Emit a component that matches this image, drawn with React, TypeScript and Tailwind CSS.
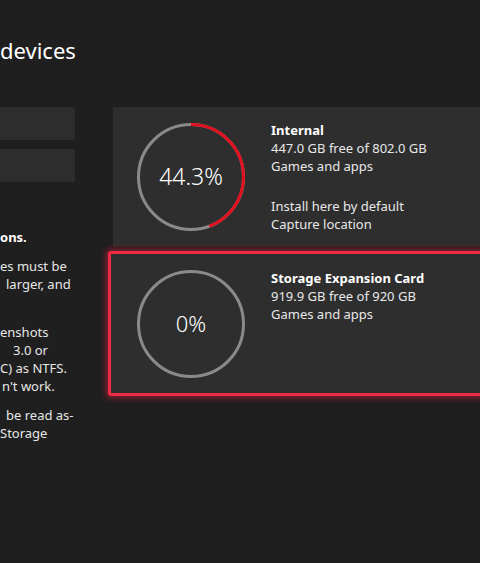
const font = { fontFamily: '"Noto Sans", "Open Sans", sans-serif' };

type RingProps = { percent: number; label: string; labelClass: string };

const Ring = ({ percent, label, labelClass }: RingProps) => {
  const r = 52.5;
  const c = 2 * Math.PI * r;
  return (
    <div className="relative h-[108px] w-[108px] shrink-0">
      <svg width="108" height="108" viewBox="0 0 108 108" className="absolute inset-0">
        <circle cx="54" cy="54" r={r} fill="none" stroke="#8a8a8a" strokeWidth="3" />
        {percent > 0 && (
          <circle
            cx="54"
            cy="54"
            r={r}
            fill="none"
            stroke="#e2101f"
            strokeWidth="3"
            strokeDasharray={`${(c * percent) / 100} ${c}`}
            transform="rotate(-90 54 54)"
          />
        )}
      </svg>
      <div className={`absolute inset-0 flex items-center justify-center text-white ${labelClass}`}>{label}</div>
    </div>
  );
};

export default function App() {
  return (
    <div className="h-[563px] w-[480px] overflow-hidden bg-[#1f1f1f] text-white" style={font}>
      <h1 className="pt-[35px] text-[22px] leading-[30px] font-normal text-white">devices</h1>
      <div className="mt-[42px] flex">
        <div className="w-[75px] shrink-0">
          <div className="h-[33px] rounded-r-[2px] bg-[#2d2d2d]" />
          <div className="mt-[9px] h-[33px] rounded-r-[2px] bg-[#2d2d2d]" />
          <div className="mt-[46px] w-[120px] text-[13px] leading-[18px] text-[#e6e6e6]">
            <p className="font-bold text-white">ons.</p>
            <div className="mt-[11px]">
              <p className="whitespace-nowrap">es must be</p>
              <p className="whitespace-nowrap pl-[6px]">larger, and</p>
            </div>
            <div className="mt-[30px]">
              <p className="whitespace-nowrap">enshots</p>
              <p className="whitespace-nowrap pl-[13px]">3.0 or</p>
              <p className="whitespace-nowrap">C) as NTFS.</p>
              <p className="whitespace-nowrap pl-[2px]">n't work.</p>
            </div>
            <div className="mt-[11px]">
              <p className="whitespace-nowrap pl-[6px]">be read as-</p>
              <p className="whitespace-nowrap">Storage</p>
            </div>
          </div>
        </div>
        <div className="ml-[33px] w-[420px] shrink-0">
          <div className="ml-[5px] flex h-[139px] items-center bg-[#2e2e2e] pl-[24px]">
            <Ring percent={44.3} label="44.3%" labelClass="text-[23px] font-light" />
            <div className="ml-[26px] self-start pt-[14px] text-[13px] leading-[18px] text-[#e8e8e8]">
              <p className="font-bold text-white">Internal</p>
              <p>447.0 GB free of 802.0 GB</p>
              <p>Games and apps</p>
              <p className="mt-[22px]">Install here by default</p>
              <p>Capture location</p>
            </div>
          </div>
          <div className="mt-[5px] flex h-[145px] items-center rounded-[3px] border-[3px] border-[#ee2a44] bg-[#2e2e2e] pl-[26px] shadow-[0_0_6px_2px_rgba(230,30,60,0.55)]">
            <Ring percent={0} label="0%" labelClass="text-[22px] font-light" />
            <div className="ml-[26px] self-start pt-[15px] text-[13px] leading-[18px] text-[#e8e8e8]">
              <p className="font-bold text-white">Storage Expansion Card</p>
              <p>919.9 GB free of 920 GB</p>
              <p>Games and apps</p>
            </div>
          </div>
        </div>
      </div>
    </div>
  );
}
